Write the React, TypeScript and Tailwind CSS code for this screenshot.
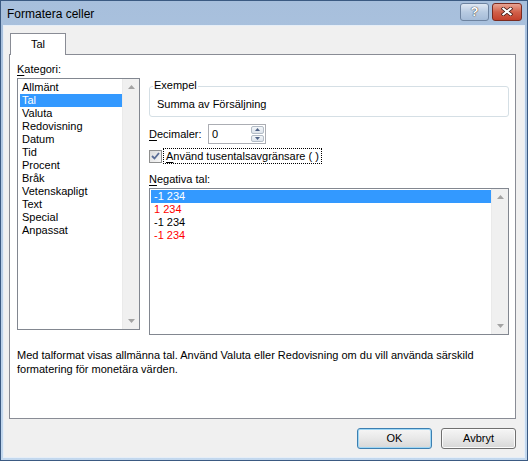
import type { ReactNode } from 'react'

const font = { fontFamily: '"Liberation Sans", Arial, sans-serif' }

const categories = ['Allmänt', 'Tal', 'Valuta', 'Redovisning', 'Datum', 'Tid', 'Procent', 'Bråk', 'Vetenskapligt', 'Text', 'Special', 'Anpassat']

const negatives = [
  { text: '-1 234', red: false },
  { text: '1 234', red: true },
  { text: '-1 234', red: false },
  { text: '-1 234', red: true },
]

function Arrow({ up }: { up: boolean }) {
  return (
    <svg width="7" height="4" viewBox="0 0 7 4" className="block">
      <path d={up ? 'M0 4 L3.5 0 L7 4 Z' : 'M0 0 L3.5 4 L7 0 Z'} fill="#a3a3a3" />
    </svg>
  )
}

function Scrollbar() {
  return (
    <div className="w-[17px] h-full flex flex-col justify-between items-center bg-[#f0f0f0] border-l border-[#eaeaea] py-[6px]">
      <Arrow up />
      <Arrow up={false} />
    </div>
  )
}

function Key({ children }: { children: ReactNode }) {
  return <span className="underline underline-offset-[2px]">{children}</span>
}

function Button({ children, primary }: { children: ReactNode; primary?: boolean }) {
  return (
    <div
      className={
        'w-[75px] h-[21px] rounded-[3px] border flex items-center justify-center text-[11px] text-black bg-gradient-to-b from-[#f6f6f6] via-[#e8e8e8] to-[#d7d7d7] ' +
        (primary ? 'border-[#3c7fb1] shadow-[inset_0_0_0_1px_#9fd7f5]' : 'border-[#707070] shadow-[inset_0_0_0_1px_#fbfbfb]')
      }
    >
      {children}
    </div>
  )
}

export default function App() {
  return (
    <div style={font} className="w-[528px] h-[461px] bg-[#3b5a82] p-px">
      <div className="w-full h-full flex flex-col bg-gradient-to-b from-[#a7bfdc] to-[#c3d8ee]">
        {/* title bar */}
        <div className="h-[24px] flex items-center pl-[6px] pr-[5px]">
          <span className="text-[12px] text-black flex-1 pt-px">Formatera celler</span>
          <div className="flex items-center gap-[3px] -mt-[3px]">
            <div className="w-[29px] h-[18px] rounded-[3px] border border-[#6d83a0] bg-gradient-to-b from-[#dfe8f3] via-[#b8cbe2] to-[#a5bcd8] flex items-center justify-center">
              <span className="text-[13px] font-bold text-white leading-none [text-shadow:0_0_1px_#333,0_0_1px_#333]">?</span>
            </div>
            <div className="w-[30px] h-[18px] rounded-[3px] border border-[#7a2a1f] bg-gradient-to-b from-[#e8a493] via-[#d1604a] to-[#c4402b] flex items-center justify-center">
              <svg width="12" height="9" viewBox="0 0 12 9">
                <path d="M1 0.5 L11 8.5 M11 0.5 L1 8.5" stroke="#3a1510" strokeWidth="3.4" />
                <path d="M1.5 1 L10.5 8 M10.5 1 L1.5 8" stroke="#ffffff" strokeWidth="2.2" />
              </svg>
            </div>
          </div>
        </div>

        {/* client */}
        <div className="flex-1 mx-[2px] mb-[2px] bg-[#f0f0f0] border border-[#e6eef7] flex flex-col pl-[5px] pr-[8px]">
          <div className="h-[28px] flex items-end">
            <div className="ml-[1px] w-[56px] h-[22px] bg-white border border-b-0 border-[#898c95] flex items-center justify-center text-[11px] text-black relative top-px">
              Tal
            </div>
          </div>
          <div className="h-[365px] bg-white border border-[#898c95] flex flex-col pl-[7px] pr-[6px] pt-[8px]">
            <div className="flex gap-[9px]">
              {/* left column */}
              <div className="w-[123px] flex flex-col">
                <div className="text-[11px] leading-[13px] text-black">
                  <Key>K</Key>ategori:
                </div>
                <div className="mt-[2px] h-[252px] border border-[#828790] flex">
                  <div className="flex-1 pt-[2px] pl-[2px]">
                    {categories.map(c => (
                      <div
                        key={c}
                        className={
                          'h-[13px] leading-[13px] text-[11px] pl-[2px] ' +
                          (c === 'Tal' ? 'bg-[#3399ff] text-white' : 'text-black')
                        }
                      >
                        {c}
                      </div>
                    ))}
                  </div>
                  <Scrollbar />
                </div>
              </div>

              {/* right column */}
              <div className="flex-1 flex flex-col">
                <div className="mt-[23px] h-[31px] relative border border-[#d5dfe5] rounded-[3px] flex items-center pl-[7px] pt-[5px]">
                  <span className="absolute left-[3px] -top-[8px] bg-white px-[1px] text-[11px] leading-[13px] text-black">Exempel</span>
                  <span className="text-[11px] text-black">Summa av Försäljning</span>
                </div>
                <div className="mt-[7px] flex items-center h-[20px]">
                  <span className="w-[59px] text-[11px] text-black">
                    <Key>D</Key>ecimaler:
                  </span>
                  <div className="w-[58px] h-[20px] border border-[#abadb3] flex items-stretch">
                    <span className="flex-1 pl-[3px] text-[11px] leading-[18px] text-black">0</span>
                    <div className="w-[15px] flex flex-col gap-px p-px">
                      <div className="flex-1 rounded-[2px] border border-[#b3bcc6] bg-gradient-to-b from-[#f3f6f9] to-[#dde4ec] flex items-center justify-center">
                        <svg width="5" height="3" viewBox="0 0 5 3"><path d="M0 3 L2.5 0 L5 3 Z" fill="#4d6185" /></svg>
                      </div>
                      <div className="flex-1 rounded-[2px] border border-[#b3bcc6] bg-gradient-to-b from-[#f3f6f9] to-[#dde4ec] flex items-center justify-center">
                        <svg width="5" height="3" viewBox="0 0 5 3"><path d="M0 0 L2.5 3 L5 0 Z" fill="#4d6185" /></svg>
                      </div>
                    </div>
                  </div>
                </div>
                <div className="mt-[4px] h-[16px] flex items-center">
                  <div className="w-[13px] h-[13px] border border-[#8e8f8f] bg-gradient-to-br from-[#dcdcdc] to-[#f8f8f8] flex items-center justify-center">
                    <svg width="9" height="8" viewBox="0 0 9 8">
                      <path d="M1 4 L3.5 6.5 L8 1" stroke="#5a6d96" strokeWidth="1.8" fill="none" />
                    </svg>
                  </div>
                  <span className="ml-[1px] h-[16px] border border-dotted border-black px-[2px] text-[11px] leading-[14px] text-black">
                    <Key>A</Key>nvänd tusentalsavgränsare ( )
                  </span>
                </div>
                <div className="mt-[9px] text-[11px] leading-[13px] text-black">
                  <Key>N</Key>egativa tal:
                </div>
                <div className="mt-[2px] h-[147px] border border-[#828790] flex">
                  <div className="flex-1 pt-[1px] pl-[1px]">
                    {negatives.map((n, i) => (
                      <div
                        key={i}
                        className={
                          'h-[13px] leading-[13px] text-[11px] pl-[3px] ' +
                          (i === 0 ? 'bg-[#3399ff] text-white' : n.red ? 'text-[#ff0000]' : 'text-black')
                        }
                      >
                        {n.text}
                      </div>
                    ))}
                  </div>
                  <Scrollbar />
                </div>
              </div>
            </div>
            <p className="mt-[13px] text-[11px] leading-[14px] text-black w-[460px]">
              Med talformat visas allmänna tal. Använd Valuta eller Redovisning om du vill använda särskild formatering för monetära värden.
            </p>
          </div>
          <div className="mt-[9px] flex justify-end gap-[9px]">
            <Button primary>OK</Button>
            <Button>Avbryt</Button>
          </div>
        </div>
      </div>
    </div>
  )
}
